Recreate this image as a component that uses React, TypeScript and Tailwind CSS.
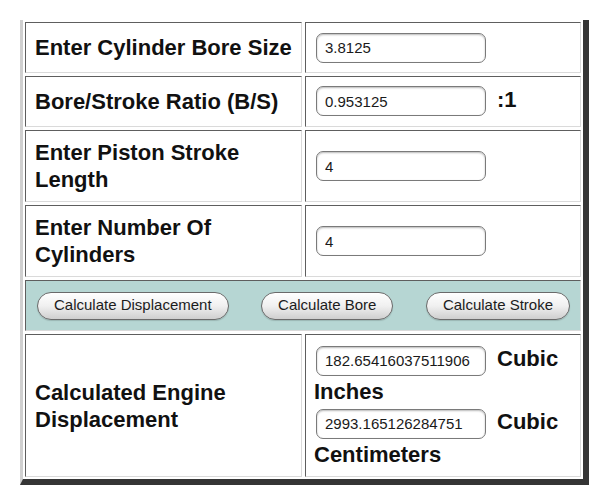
import React from "react";

const font = { fontFamily: '"Liberation Sans", Arial, sans-serif' };

const cell =
  "border border-t-[#5e5e5e] border-l-[#5e5e5e] border-b-[#dadada] border-r-[#dadada] bg-white";

function Field({ value }: { value: string }) {
  return (
    <input
      readOnly
      value={value}
      className="w-[170px] h-[30px] my-[2px] ml-[2px] rounded-[7px] border border-[#7a7a7a] bg-white pl-2 text-[15px] font-normal text-[#1a1a1a] shadow-[inset_0_1px_2px_rgba(0,0,0,0.28)] outline-none"
      style={font}
    />
  );
}

function Label({ h, children }: { h: string; children: React.ReactNode }) {
  return (
    <div className={`${cell} ${h} flex items-center pl-[9px] pr-2 text-[22px] font-bold leading-[27px] text-[#111]`}>
      <span>{children}</span>
    </div>
  );
}

function Btn({ children }: { children: React.ReactNode }) {
  return (
    <button className="h-[28px] rounded-full border border-[#6a6a6a] bg-linear-to-b from-white via-[#f0f0f0] to-[#cfcfcf] px-4 text-[15px] text-[#1c1c1c] shadow-[0_1px_1px_rgba(0,0,0,0.15)]">
      {children}
    </button>
  );
}

export default function App() {
  return (
    <div className="min-h-screen bg-white pt-5 pl-5" style={font}>
      <div className="w-[569px] border-l-[3px] border-l-[#d0d0d0] border-r-[6px] border-r-[#353535] border-b-[6px] border-b-[#353535] p-[2px] grid grid-cols-[277px_276px] gap-[3px]">
        {/* bore */}
        <Label h="h-[51px]">Enter Cylinder Bore Size</Label>
        <div className={`${cell} h-[51px] flex items-center pl-2`}>
          <Field value="3.8125" />
        </div>

        {/* ratio */}
        <Label h="h-[51px]">Bore/Stroke Ratio (B/S)</Label>
        <div className={`${cell} h-[51px] flex items-baseline pl-2 pt-[7px]`}>
          <Field value="0.953125" />
          <span className="ml-[11px] text-[22px] font-bold leading-[27px] text-[#111]">:1</span>
        </div>

        {/* stroke */}
        <Label h="h-[72px]">Enter Piston Stroke Length</Label>
        <div className={`${cell} h-[72px] flex items-center pl-2`}>
          <Field value="4" />
        </div>

        {/* cylinders */}
        <Label h="h-[72px]">Enter Number Of Cylinders</Label>
        <div className={`${cell} h-[72px] flex items-center pl-2`}>
          <Field value="4" />
        </div>

        {/* buttons */}
        <div className="col-span-2 h-[51px] border border-t-[#5e5e5e] border-l-[#5e5e5e] border-b-[#dadada] border-r-[#dadada] bg-[#b6d6d3] flex items-center justify-between pl-[11px] pr-[10px]">
          <Btn>Calculate Displacement</Btn>
          <Btn>Calculate Bore</Btn>
          <Btn>Calculate Stroke</Btn>
        </div>

        {/* result */}
        <Label h="h-[143px]">Calculated Engine Displacement</Label>
        <div className={`${cell} h-[143px] flex flex-col justify-center pl-2 text-[22px] font-bold leading-[27px] text-[#111]`}>
          <div className="flex items-baseline">
            <Field value="182.65416037511906" />
            <span className="ml-[11px]">Cubic</span>
          </div>
          <div className="mb-[2px]">Inches</div>
          <div className="flex items-baseline">
            <Field value="2993.165126284751" />
            <span className="ml-[11px]">Cubic</span>
          </div>
          <div>Centimeters</div>
        </div>
      </div>
    </div>
  );
}
